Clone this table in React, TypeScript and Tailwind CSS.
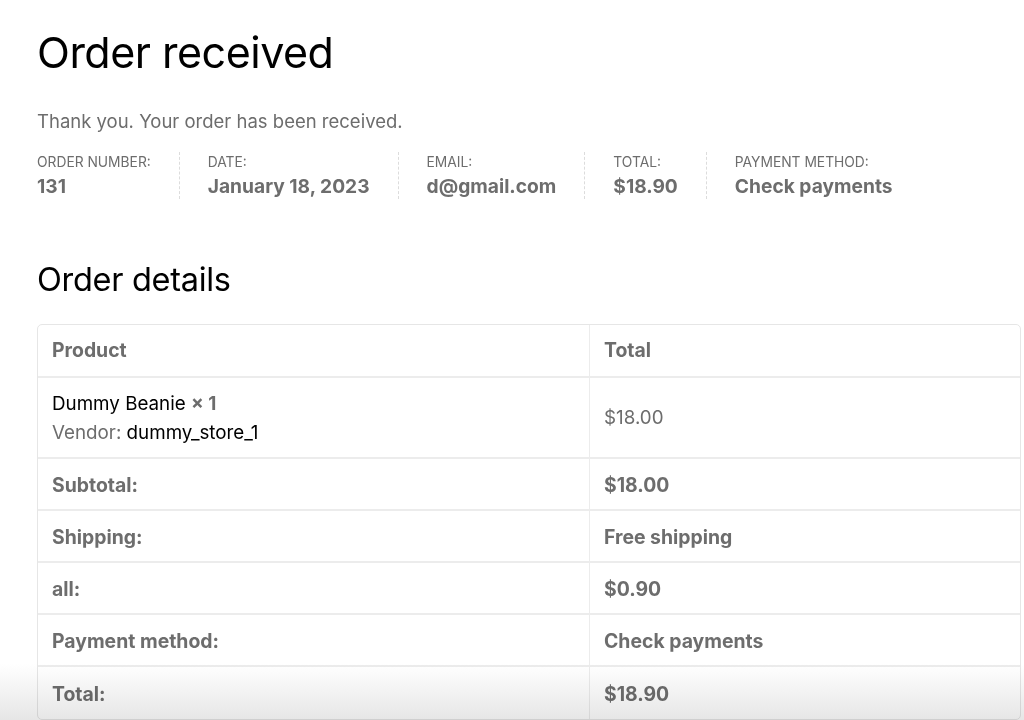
const overview = [
  { label: 'Order number:', value: '131' },
  { label: 'Date:', value: 'January 18, 2023' },
  { label: 'Email:', value: 'd@gmail.com' },
  { label: 'Total:', value: '$18.90' },
  { label: 'Payment method:', value: 'Check payments' },
]

const totals = [
  { label: 'Subtotal:', value: '$18.00' },
  { label: 'Shipping:', value: 'Free shipping' },
  { label: 'all:', value: '$0.90' },
  { label: 'Payment method:', value: 'Check payments' },
  { label: 'Total:', value: '$18.90' },
]

const App = () => {
  return (
    <div className="relative h-[720px] overflow-hidden bg-white font-['Inter',sans-serif]">
      <div className="pl-[37px] pt-[24px]">
        <h1 className="text-[43px] leading-[56px] font-normal text-black tracking-[-0.5px]">Order received</h1>

        <p className="mt-[29px] text-[18.5px] leading-[24px] text-[#6d6d6d]">Thank you. Your order has been received.</p>

        <ul className="mt-[19px] flex">
          {overview.map((item, i) => (
            <li
              key={item.label}
              className={
                'py-[1px] ' +
                (i === 0 ? 'pr-[28px] ' : 'px-[28px] ') +
                (i < overview.length - 1 ? 'border-r border-dashed border-[#dcdcdc]' : '')
              }
            >
              <div className="text-[13.8px] leading-[18px] uppercase text-[#6d6d6d]">{item.label}</div>
              <div className="mt-[3px] text-[19.2px] leading-[24px] font-bold text-[#6d6d6d]">{item.value}</div>
            </li>
          ))}
        </ul>

        <h2 className="mt-[59px] text-[32.5px] leading-[44px] font-normal text-black tracking-[-0.3px]">Order details</h2>

        <div className="mt-[22px] mr-[3px] border border-[#e6e6e6] rounded-[5px] text-[18.8px]">
          <div className="grid grid-cols-[552px_1fr] h-[53px] border-b-2 border-[#ececec]">
            <div className="px-[14px] pt-[1px] flex items-center text-[19.4px] font-bold text-[#6d6d6d] border-r border-[#ececec]">Product</div>
            <div className="px-[14px] pt-[1px] flex items-center text-[19.4px] font-bold text-[#6d6d6d]">Total</div>
          </div>
          <div className="grid grid-cols-[552px_1fr] h-[81px] border-b-2 border-[#ececec]">
            <div className="px-[14px] flex flex-col justify-center border-r border-[#ececec] leading-[29px]">
              <div className="text-black">
                Dummy Beanie <span className="font-bold text-[#6d6d6d]">× 1</span>
              </div>
              <div className="text-[#6d6d6d]">
                Vendor: <span className="text-black">dummy_store_1</span>
              </div>
            </div>
            <div className="px-[14px] pt-[2px] flex items-center text-[#6d6d6d]">$18.00</div>
          </div>
          {totals.map((row, i) => (
            <div
              key={row.label}
              className={
                'grid grid-cols-[552px_1fr] h-[52px] ' + (i < totals.length - 1 ? 'border-b-2 border-[#ececec]' : '')
              }
            >
              <div className="px-[14px] pt-[3px] flex items-center text-[19.4px] font-bold text-[#6d6d6d] border-r border-[#ececec]">{row.label}</div>
              <div className="px-[14px] pt-[3px] flex items-center text-[19.4px] font-bold text-[#6d6d6d]">{row.value}</div>
            </div>
          ))}
        </div>
      </div>

      <div className="pointer-events-none absolute left-0 right-0 bottom-0 h-[56px] bg-gradient-to-b from-white to-[#e6e6e6] mix-blend-multiply" />
    </div>
  )
}

export default App
